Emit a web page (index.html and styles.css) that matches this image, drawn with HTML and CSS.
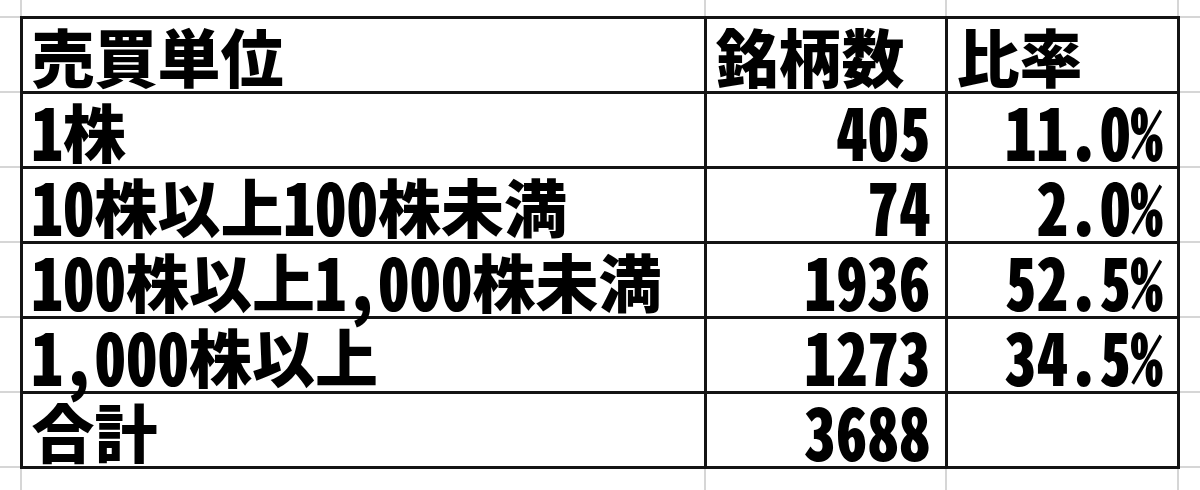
FILE: index.html
```html
<!DOCTYPE html>
<html lang="ja">
<head>
<meta charset="utf-8">
<title>売買単位</title>
<link rel="stylesheet" href="styles.css">
</head>
<body>
<table class="sheet">
  <colgroup>
    <col class="w-edge-l">
    <col class="w-a">
    <col class="w-b">
    <col class="w-c">
    <col class="w-edge-r">
  </colgroup>
  <tr class="row-top"><td></td><td></td><td></td><td></td><td></td></tr>
  <tr class="row">
    <td></td>
    <td class="c">売買単位</td>
    <td class="c">銘柄数</td>
    <td class="c">比率</td>
    <td></td>
  </tr>
  <tr class="row">
    <td></td>
    <td class="c"><span class="n">1</span>株</td>
    <td class="c r"><span class="n">405</span></td>
    <td class="c r"><span class="n">11.0%</span></td>
    <td></td>
  </tr>
  <tr class="row">
    <td></td>
    <td class="c"><span class="n">10</span>株以上<span class="n">100</span>株未満</td>
    <td class="c r"><span class="n">74</span></td>
    <td class="c r"><span class="n">2.0%</span></td>
    <td></td>
  </tr>
  <tr class="row">
    <td></td>
    <td class="c"><span class="n">100</span>株以上<span class="n">1,000</span>株未満</td>
    <td class="c r"><span class="n">1936</span></td>
    <td class="c r"><span class="n">52.5%</span></td>
    <td></td>
  </tr>
  <tr class="row">
    <td></td>
    <td class="c"><span class="n">1,000</span>株以上</td>
    <td class="c r"><span class="n">1273</span></td>
    <td class="c r"><span class="n">34.5%</span></td>
    <td></td>
  </tr>
  <tr class="row">
    <td></td>
    <td class="c">合計</td>
    <td class="c r"><span class="n">3688</span></td>
    <td class="c r"></td>
    <td></td>
  </tr>
  <tr class="row-bot"><td></td><td></td><td></td><td></td><td></td></tr>
</table>
</body>
</html>
```
FILE: styles.css
```css
html, body {
  margin: 0;
  padding: 0;
  background: #ffffff;
}

.sheet {
  border-collapse: collapse;
  table-layout: fixed;
  width: 1200px;
  height: 490px;
}

.w-edge-l { width: 21px; }
.w-a { width: 684px; }
.w-b { width: 241px; }
.w-c { width: 232px; }
.w-edge-r { width: 22px; }

.sheet td {
  border: 2px solid #d6d6d6;
  padding: 0;
}

.sheet tr:first-child td { border-top: none; }
.sheet tr:last-child td { border-bottom: none; }
.sheet td:first-child { border-left: none; }
.sheet td:last-child { border-right: none; }

.row-top { height: 17px; }
.row { height: 75px; }

.sheet td.c {
  border: 3px solid #141414;
  font-family: "Noto Sans CJK JP", "Noto Sans", sans-serif;
  font-weight: 900;
  font-size: 63px;
  line-height: 1;
  color: #000000;
  vertical-align: bottom;
  padding: 0 14px 5px 9px;
  white-space: nowrap;
  font-feature-settings: "hwid" 1;
}

.sheet td.r { text-align: right; }

.n {
  display: inline-block;
  line-height: 0.8;
  transform: translateY(2px) scaleY(1.15);
  transform-origin: 50% 80%;
}
```
